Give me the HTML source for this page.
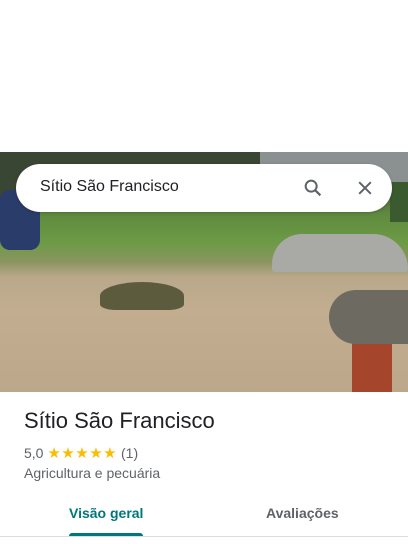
<!DOCTYPE html>
<html><head><meta charset="utf-8"><style>
*{margin:0;padding:0;box-sizing:border-box}
body{width:408px;height:544px;background:#fff;font-family:"Liberation Sans",Arial,sans-serif;position:relative;overflow:hidden}
.photo{position:absolute;left:0;top:152px;width:408px;height:240px;overflow:hidden;
background:linear-gradient(180deg,#3e4a38 0px,#56634a 40px,#5f8a3e 62px,#6c9a45 90px,#8a9560 110px,#b9a88a 125px,#c2ad90 160px,#bca78a 240px)}
.abs{position:absolute}
.bar{position:absolute;left:16px;top:164px;width:376px;height:48px;background:#fff;border-radius:24px;box-shadow:0 1px 3px rgba(0,0,0,.2)}
.bar span{position:absolute;left:24px;top:14px;font-size:16px;color:#202124}
</style></head><body>
<div class="photo">
 <div class="abs" style="left:0;top:0;width:260px;height:55px;background:#3a4634"></div>
 <div class="abs" style="left:260px;top:0;width:148px;height:40px;background:#8a9190"></div>
 <div class="abs" style="left:390px;top:30px;width:18px;height:40px;background:#3c5a30"></div>
 <div class="abs" style="left:272px;top:82px;width:136px;height:38px;background:#a9a9a6;border-radius:60px 70px 6px 6px"></div>
 <div class="abs" style="left:100px;top:130px;width:84px;height:28px;background:#5c5b3e;border-radius:50% 50% 20% 20%"></div>
 <div class="abs" style="left:0;top:38px;width:40px;height:60px;background:#2a3c6a;border-radius:10px"></div>
 <div class="abs" style="left:352px;top:180px;width:40px;height:60px;background:#a4452c"></div>
 <div class="abs" style="left:329px;top:138px;width:90px;height:54px;background:#6d6a62;border-radius:40px 0 0 40px"></div>
</div>
<div class="bar"><span>Sítio São Francisco</span>
 <svg class="abs" style="left:286px;top:13px" width="22" height="22" viewBox="0 0 24 24"><circle cx="10" cy="10" r="6" fill="none" stroke="#5f6368" stroke-width="2.2"/><path d="M14.5 14.5L20 20" stroke="#5f6368" stroke-width="2.4"/></svg>
 <svg class="abs" style="left:339px;top:14px" width="20" height="20" viewBox="0 0 24 24"><path d="M5 5L19 19M19 5L5 19" stroke="#5f6368" stroke-width="2.4"/></svg>
</div>
<div class="abs" style="left:24px;top:408px;font-size:22px;color:#202124">Sítio São Francisco</div>
<div class="abs" style="left:24px;top:444px;font-size:14px;color:#5f6368">5,0 <span style="color:#fbbc04;letter-spacing:0.5px;font-size:15px">★★★★★</span> (1)</div>
<div class="abs" style="left:24px;top:465px;font-size:14px;color:#5f6368">Agricultura e pecuária</div>
<div class="abs" style="left:69px;top:505px;font-size:14px;color:#00777a;font-weight:bold;">Visão geral</div>
<div class="abs" style="left:266px;top:505px;font-size:14px;color:#5f6368;font-weight:bold">Avaliações</div>
<div class="abs" style="left:69px;top:533px;width:74px;height:3px;background:#00777a;border-radius:3px 3px 0 0"></div>
<div class="abs" style="left:0;top:536px;width:408px;height:1px;background:#dadce0"></div>
</body></html>
